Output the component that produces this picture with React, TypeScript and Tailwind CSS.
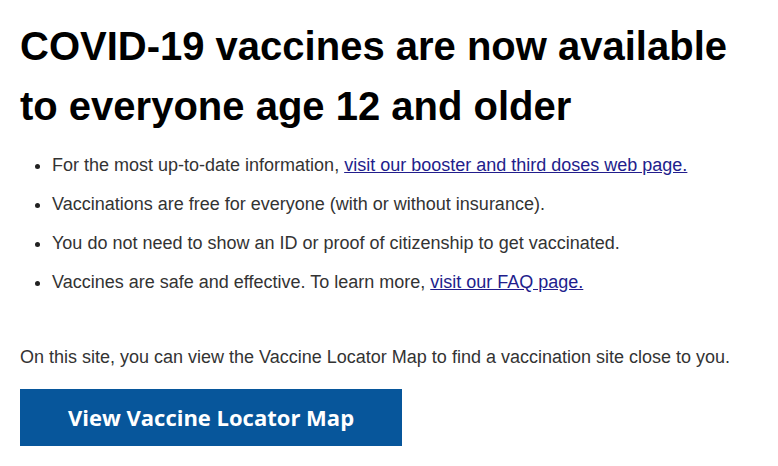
export default function App() {
  return (
    <div className="min-h-screen bg-white px-5 pt-[16px] font-['Liberation_Sans',Arial,sans-serif] text-[#333]">
      <h1 className="text-[40px] font-bold leading-[60px] text-black">
        COVID-19 vaccines are now available
        <br />
        to everyone age 12 and older
      </h1>

      <ul className="mt-[10px] list-disc pl-8 text-[18px] leading-[39px] marker:text-[#222]">
        <li>
          For the most up-to-date information,{" "}
          <a href="#" className="text-[#221d8c] underline">
            visit our booster and third doses web page.
          </a>
        </li>
        <li>Vaccinations are free for everyone (with or without insurance).</li>
        <li>You do not need to show an ID or proof of citizenship to get vaccinated.</li>
        <li>
          Vaccines are safe and effective. To learn more,{" "}
          <a href="#" className="text-[#221d8c] underline">
            visit our FAQ page.
          </a>
        </li>
      </ul>

      <p className="mt-[43px] text-[18px] leading-[24px]">
        On this site, you can view the Vaccine Locator Map to find a vaccination site close to you.
      </p>

      <button className="mt-[20px] flex h-[57px] w-[382px] items-center justify-center bg-[#07569b] font-['Open_Sans',sans-serif] text-[22px] font-bold text-white">
        View Vaccine Locator Map
      </button>
    </div>
  );
}
